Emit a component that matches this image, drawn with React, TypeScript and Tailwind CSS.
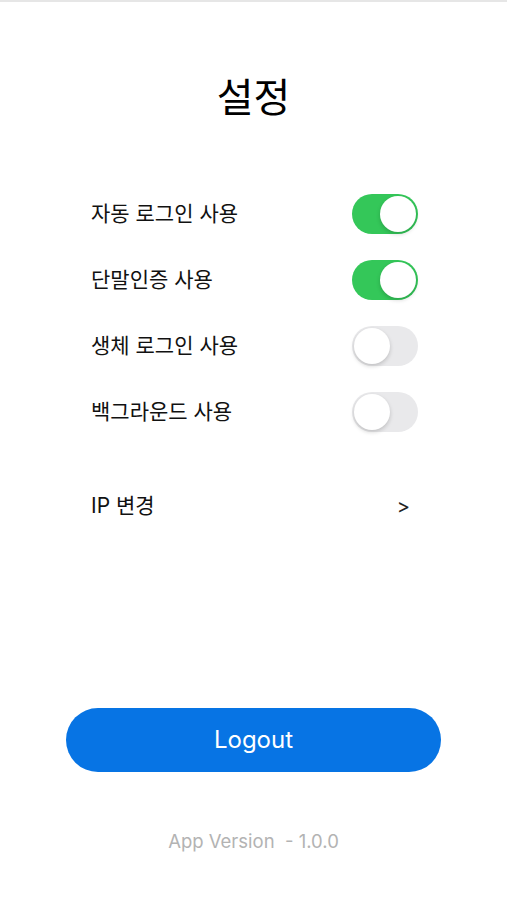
import { useState } from "react";

const font = { fontFamily: 'Inter, "Noto Sans CJK KR", "Noto Sans", sans-serif' };

function Toggle({ on }: { on: boolean }) {
  return (
    <div
      className={`flex h-[40px] w-[66px] items-center rounded-full p-[2px] ${
        on ? "justify-end bg-[#34c759]" : "justify-start bg-[#e9e9eb]"
      }`}
    >
      <div className="h-[36px] w-[36px] rounded-full bg-white shadow-[0_2px_4px_rgba(0,0,0,0.18)]" />
    </div>
  );
}

const rows = [
  { label: "자동 로그인 사용", on: true },
  { label: "단말인증 사용", on: true },
  { label: "생체 로그인 사용", on: false },
  { label: "백그라운드 사용", on: false },
];

export default function App() {
  const [items] = useState(rows);

  return (
    <div className="flex min-h-[900px] w-full flex-col border-t-2 border-[#e6e6e6] bg-white" style={font}>
      <h1 className="mt-[70px] text-center text-[40px] leading-[52px] text-black">설정</h1>

      <div className="mt-[70px] flex flex-col gap-[26px] pl-[91px] pr-[89px]">
        {items.map((r) => (
          <div key={r.label} className="flex items-center justify-between">
            <span className="text-[21px] text-[#111]">{r.label}</span>
            <Toggle on={r.on} />
          </div>
        ))}
      </div>

      <div className="mt-[58px] flex items-center justify-between pl-[91px] pr-[97px]">
        <span className="text-[21px] text-[#111]">IP 변경</span>
        <span className="text-[20px] text-[#222]">&gt;</span>
      </div>

      <div className="mt-[186px] px-[66px]">
        <button className="h-[64px] w-full rounded-full bg-[#0774e4] text-[24px] text-white">
          Logout
        </button>
      </div>

      <p className="mt-[56px] text-center text-[18.5px] text-[#b3b3b3]">App Version&nbsp; - 1.0.0</p>
    </div>
  );
}
